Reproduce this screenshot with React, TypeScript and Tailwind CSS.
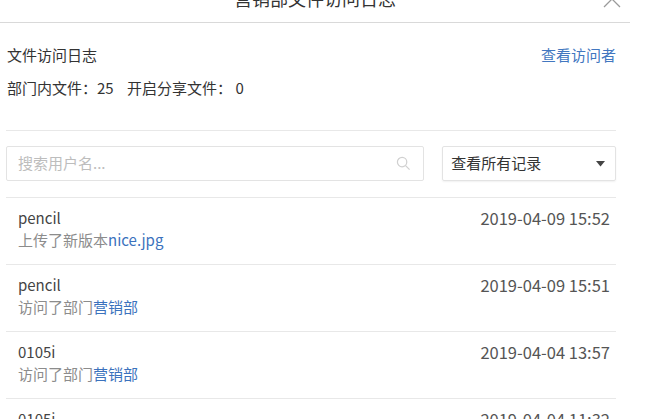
const font = { fontFamily: '"Noto Sans CJK SC", "Noto Sans", sans-serif' }

type Log = { user: string; time: string; action: string; target: string }

const logs: Log[] = [
  { user: "pencil", time: "2019-04-09 15:52", action: "上传了新版本", target: "nice.jpg" },
  { user: "pencil", time: "2019-04-09 15:51", action: "访问了部门", target: "营销部" },
  { user: "0105i", time: "2019-04-04 13:57", action: "访问了部门", target: "营销部" },
  { user: "0105i", time: "2019-04-04 11:32", action: "访问了部门", target: "营销部" },
]

function LogRow({ log }: { log: Log }) {
  return (
    <div className="flex items-start justify-between border-b border-[#e8e8e8] pl-[12px] pr-[6px] pt-[10px] pb-[14px]">
      <div className="flex flex-col gap-[2px]">
        <div className="text-[15px] leading-[20px] text-[#444]">{log.user}</div>
        <div className="text-[15px] leading-[20px] text-[#8c8c8c]">
          {log.action}
          <span className="text-[#3b72bd]">{log.target}</span>
        </div>
      </div>
      <div className="text-[16.5px] leading-[20px] text-[#555]">{log.time}</div>
    </div>
  )
}

export default function App() {
  return (
    <div className="relative h-[419px] w-[649px] overflow-hidden bg-white" style={font}>
      {/* modal header, cut off at the top */}
      <div className="relative flex h-[23px] w-[630px] justify-center border-b border-[#d9d9d9]">
        <div className="-mt-[11px] text-[18px] leading-[18px] text-[#333]">营销部文件访问日志</div>
        <svg className="absolute right-[9px] -top-[10px] h-[18px] w-[18px]" viewBox="0 0 18 18" fill="none" stroke="#9a9a9a" strokeWidth="1.3">
          <path d="M1 1L17 17M17 1L1 17" />
        </svg>
      </div>

      <div className="w-[616px] pl-[6px]">
        <div className="mt-[21px] flex h-[22px] items-center justify-between pl-[1px] text-[15px]">
          <span className="text-[#333]">文件访问日志</span>
          <span className="text-[#4277c0]">查看访问者</span>
        </div>
        <div className="mt-[11px] flex h-[22px] items-center pl-[1px] text-[15px] text-[#333]">
          部门内文件：25&nbsp;&nbsp;&nbsp;&nbsp;开启分享文件： 0
        </div>

        <div className="mt-[31px] border-t border-[#e8e8e8]" />

        <div className="flex items-center gap-[18px] pt-[15px] pb-[16px]">
          <div className="flex h-[35px] w-[419px] items-center justify-between rounded-[2px] border border-[#e3e3e3] pl-[11px] pr-[12px]">
            <span className="text-[15px] text-[#bdbdbd]">搜索用户名...</span>
            <svg className="h-[15px] w-[15px]" viewBox="0 0 16 16" fill="none" stroke="#d0d0d0" strokeWidth="1.3">
              <circle cx="6.5" cy="6.5" r="5" />
              <path d="M10.2 10.2L14.5 14.5" />
            </svg>
          </div>
          <div className="flex h-[35px] w-[174px] items-center justify-between rounded-[2px] border border-[#e3e3e3] pl-[8px] pr-[10px] shadow-[0_1px_2px_rgba(0,0,0,0.06)]">
            <span className="text-[15px] text-[#333]">查看所有记录</span>
            <svg className="h-[6px] w-[9px]" viewBox="0 0 9 6" fill="#444">
              <path d="M0 0H9L4.5 5.5Z" />
            </svg>
          </div>
        </div>

        <div className="border-t border-[#e8e8e8]">
          {logs.map((log, i) => (
            <LogRow key={i} log={log} />
          ))}
        </div>
      </div>
    </div>
  )
}
